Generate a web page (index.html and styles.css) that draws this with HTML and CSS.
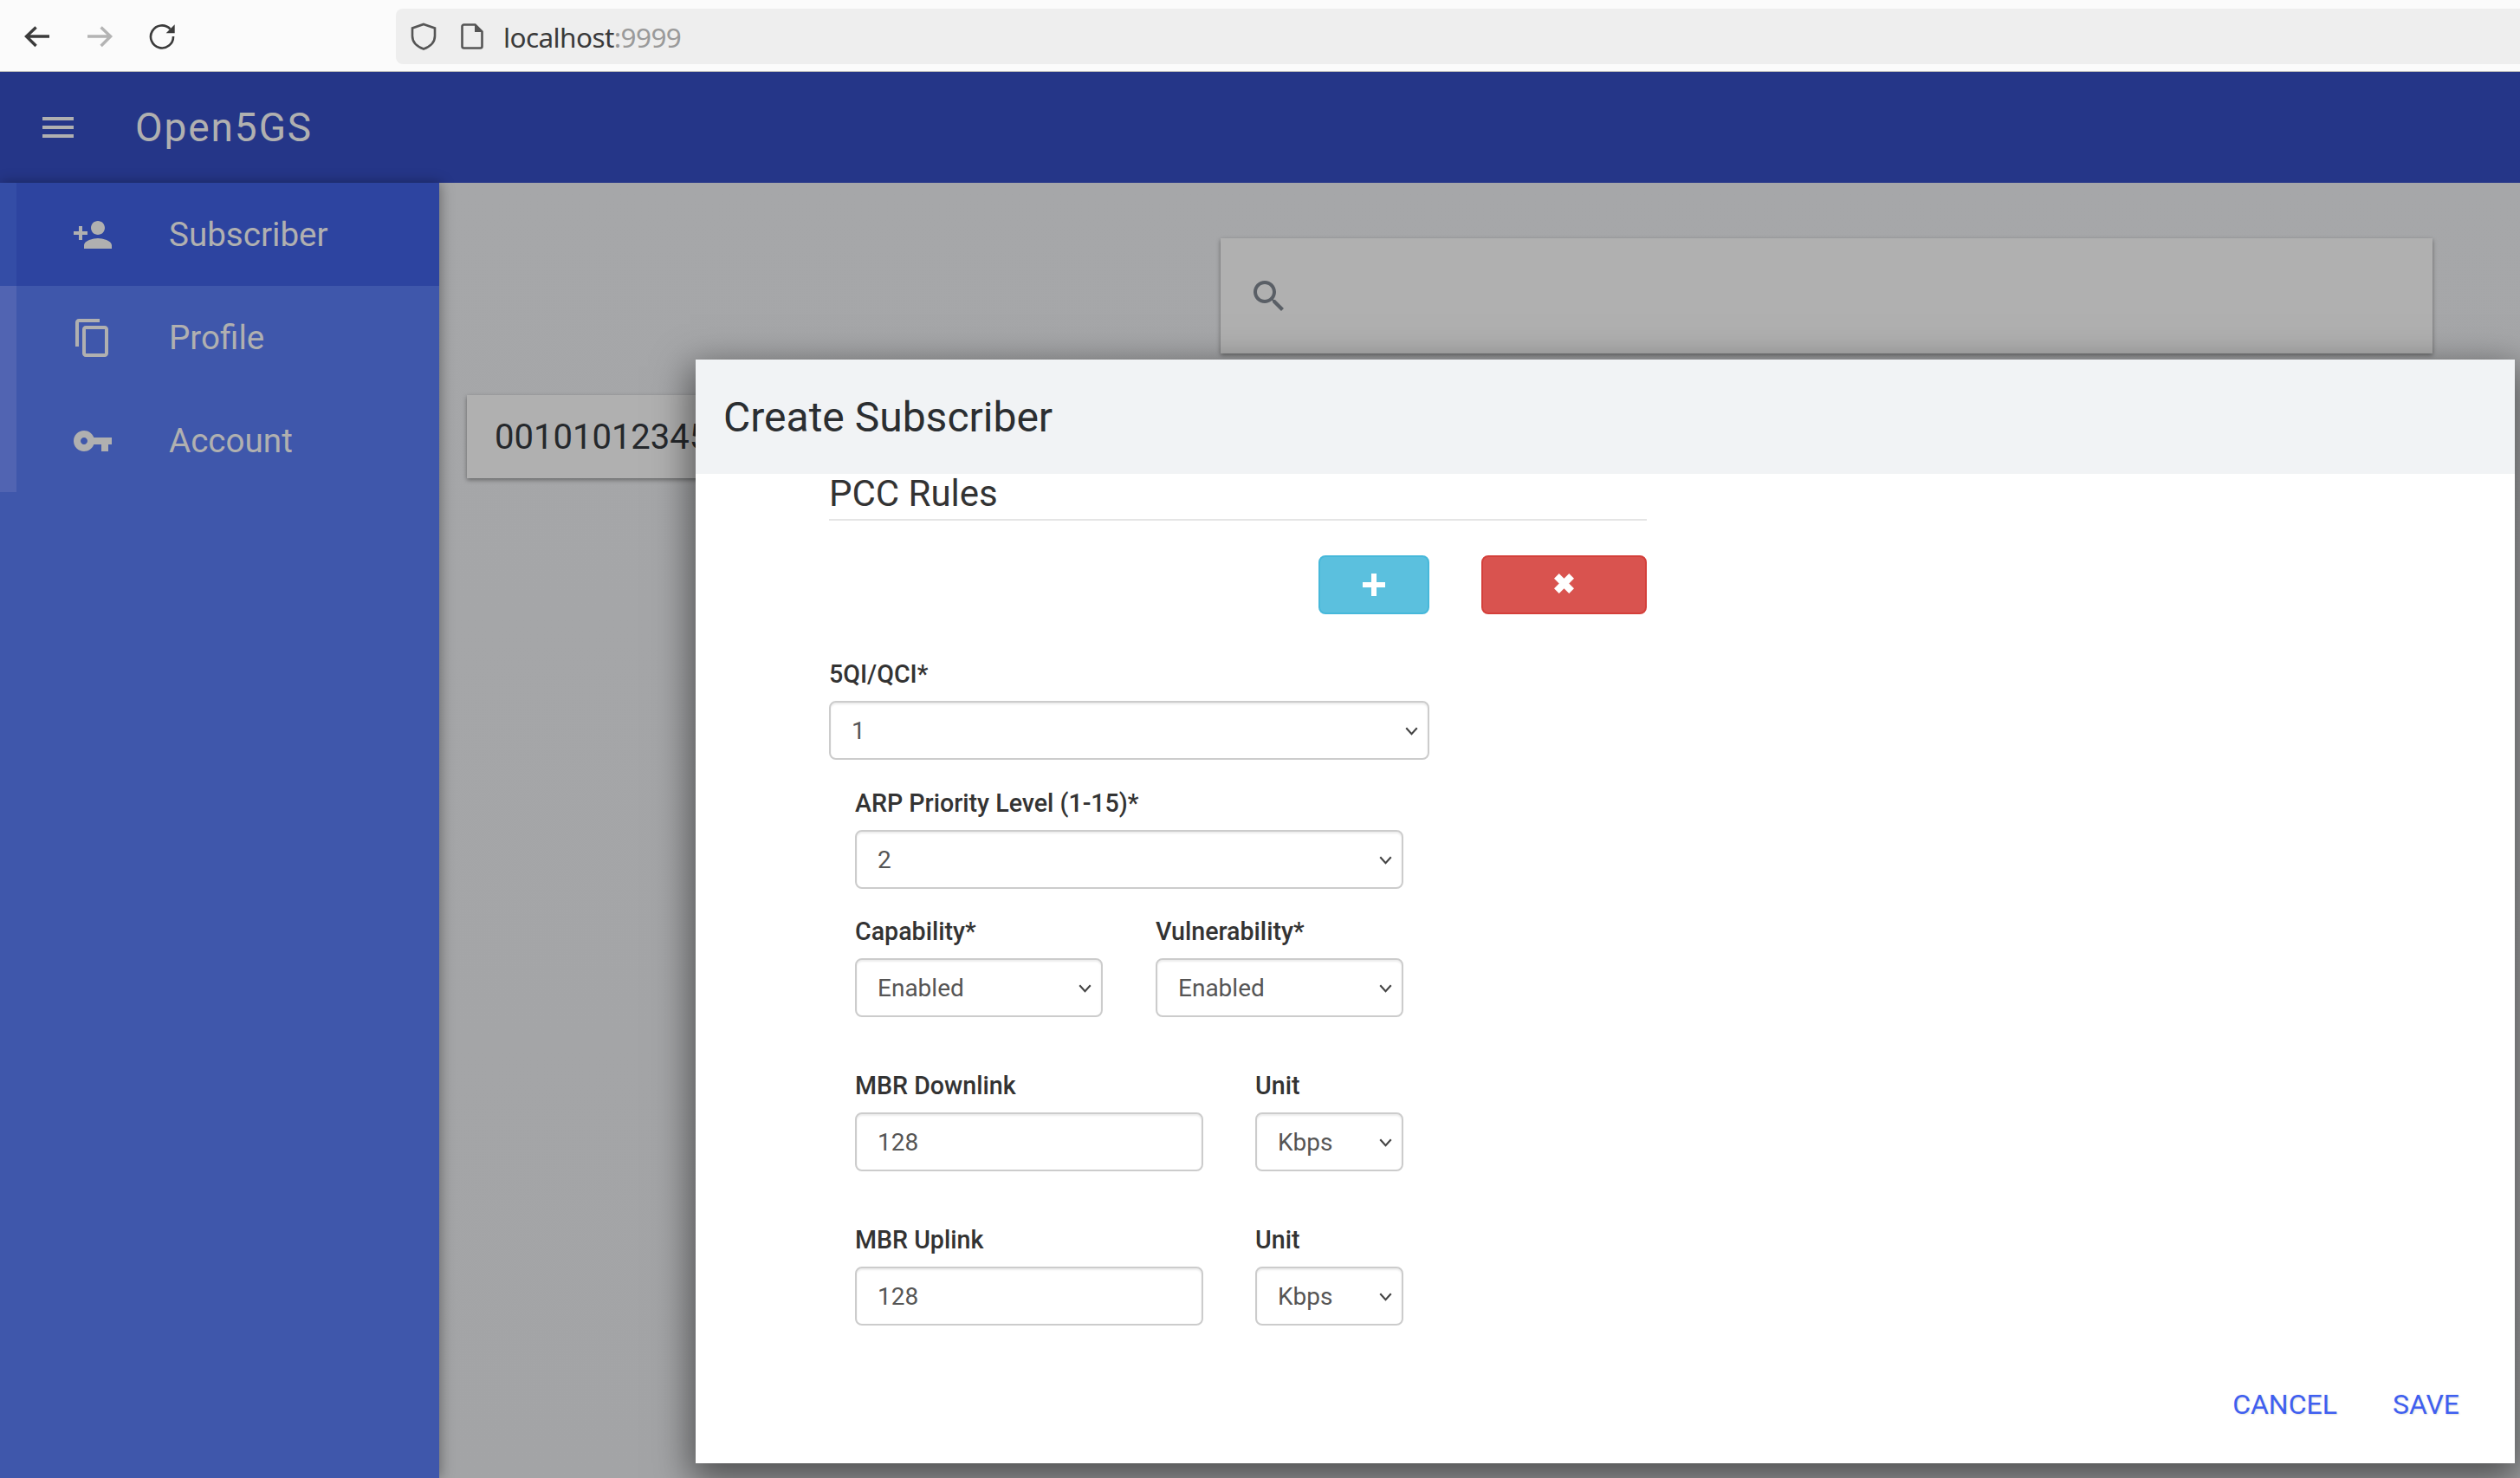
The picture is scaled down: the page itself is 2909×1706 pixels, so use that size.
FILE: index.html
```html
<!DOCTYPE html>
<html lang="en">
<head>
<meta charset="utf-8">
<title>Open5GS</title>
<link rel="stylesheet" href="styles.css">
</head>
<body>
<div class="page">
  <div class="toolbar">
    <svg class="tb-icon" viewBox="0 0 32 32"><path class="stroke dark" d="M30 16H4M14.600 5.600L3.500 16l11.100 11"/></svg>
    <svg class="tb-icon" viewBox="0 0 32 32"><path class="stroke faint" d="M2 16h26M17.600 5.600L28.600 16l-11 11"/></svg>
    <svg class="tb-icon" viewBox="0 0 32 32"><path class="stroke dark thin" d="M25.500 7.500A13 13 0 1 0 29 16"/><path class="fill-dark" d="M30.700 2.300v10h-10z"/></svg>
    <div class="urlbar">
      <svg class="shield" viewBox="0 0 30 32"><path class="stroke mid thin" d="M15 2l13 4.500v9C28 23 22 28 15 30.500 8 28 2 23 2 15.500v-9z"/></svg>
      <svg class="file" viewBox="0 0 26 30"><path class="stroke mid thin" d="M3.500 1.500h13l8 8v17a2 2 0 0 1-2 2h-19a2 2 0 0 1-2-2v-23a2 2 0 0 1 2-2z"/><path class="fill-mid" d="M16 1.500l8.500 8.500H16z"/></svg>
      <span class="url">localhost<span class="port">:9999</span></span>
    </div>
  </div>
  <header class="appbar">
    <svg class="mi menu-icon" viewBox="0 0 24 24"><path d="M3 18h18v-2H3v2zm0-5h18v-2H3v2zm0-7v2h18V6H3z"/></svg>
    <span class="brand">Open5GS</span>
  </header>
  <div class="main">
    <nav class="sidebar">
      <a class="nav-item active">
        <svg class="mi" viewBox="0 0 24 24"><path d="M15 12c2.210 0 4-1.790 4-4s-1.790-4-4-4-4 1.790-4 4 1.790 4 4 4zm-9-2V7H4v3H1v2h3v3h2v-3h3v-2H6zm9 4c-2.670 0-8 1.340-8 4v2h16v-2c0-2.660-5.330-4-8-4z"/></svg>
        <span>Subscriber</span>
      </a>
      <a class="nav-item">
        <svg class="mi" viewBox="0 0 24 24"><path d="M16 1H4c-1.100 0-2 .9-2 2v14h2V3h12V1zm3 4H8c-1.100 0-2 .9-2 2v14c0 1.100.9 2 2 2h11c1.100 0 2-.9 2-2V7c0-1.100-.9-2-2-2zm0 16H8V7h11v14z"/></svg>
        <span>Profile</span>
      </a>
      <a class="nav-item">
        <svg class="mi" viewBox="0 0 24 24"><path d="M12.650 10C11.830 7.670 9.610 6 7 6c-3.310 0-6 2.690-6 6s2.690 6 6 6c2.610 0 4.830-1.670 5.650-4H17v4h4v-4h2v-4H12.650zM7 14c-1.100 0-2-.9-2-2s.9-2 2-2 2 .9 2 2-.9 2-2 2z"/></svg>
        <span>Account</span>
      </a>
    </nav>
    <main class="content">
      <div class="search-card">
        <svg class="mi search-icon" viewBox="0 0 24 24"><path d="M15.500 14h-.79l-.28-.27C15.410 12.590 16 11.110 16 9.500 16 5.910 13.090 3 9.500 3S3 5.910 3 9.500 5.910 16 9.500 16c1.610 0 3.090-.59 4.230-1.570l.27.28v.79l5 4.990L20.490 19l-4.990-5zm-6 0C7.010 14 5 11.990 5 9.500S7.010 5 9.500 5 14 7.010 14 9.500 11.990 14 9.500 14z"/></svg>
      </div>
      <div class="sub-card">001010123456789</div>
    </main>
  </div>

  <section class="dialog">
    <h2 class="dialog-title">Create Subscriber</h2>
    <div class="dialog-body">
      <form class="form">
        <h3 class="legend">PCC Rules</h3>
        <div class="actions">
          <button type="button" class="btn btn-add"><svg class="glyph" viewBox="0 0 26 26"><path d="M10 0h6v10h10v6H16v10h-6V16H0v-6h10z"/></svg></button>
          <button type="button" class="btn btn-del"><svg class="glyph glyph-x" viewBox="0 0 24 24"><path d="M6 0l6 6 6-6 6 6-6 6 6 6-6 6-6-6-6 6-6-6 6-6-6-6z"/></svg></button>
        </div>
        <div class="field qci">
          <label class="label">5QI/QCI*</label>
          <div class="select-wrap"><select class="control"><option>1</option></select><svg class="chev" viewBox="0 0 12 8"><path d="M1 1l5 5.500L11 1"/></svg></div>
        </div>
        <div class="nested">
          <div class="field">
            <label class="label">ARP Priority Level (1-15)*</label>
            <div class="select-wrap"><select class="control"><option>2</option></select><svg class="chev" viewBox="0 0 12 8"><path d="M1 1l5 5.500L11 1"/></svg></div>
          </div>
          <div class="row-half">
            <div class="field">
              <label class="label">Capability*</label>
              <div class="select-wrap"><select class="control"><option>Enabled</option></select><svg class="chev" viewBox="0 0 12 8"><path d="M1 1l5 5.500L11 1"/></svg></div>
            </div>
            <div class="field">
              <label class="label">Vulnerability*</label>
              <div class="select-wrap"><select class="control"><option>Enabled</option></select><svg class="chev" viewBox="0 0 12 8"><path d="M1 1l5 5.500L11 1"/></svg></div>
            </div>
          </div>
          <div class="row-unit">
            <div class="field">
              <label class="label">MBR Downlink</label>
              <input class="control" type="text" value="128">
            </div>
            <div class="field">
              <label class="label">Unit</label>
              <div class="select-wrap"><select class="control"><option>Kbps</option></select><svg class="chev" viewBox="0 0 12 8"><path d="M1 1l5 5.500L11 1"/></svg></div>
            </div>
          </div>
          <div class="row-unit">
            <div class="field">
              <label class="label">MBR Uplink</label>
              <input class="control" type="text" value="128">
            </div>
            <div class="field">
              <label class="label">Unit</label>
              <div class="select-wrap"><select class="control"><option>Kbps</option></select><svg class="chev" viewBox="0 0 12 8"><path d="M1 1l5 5.500L11 1"/></svg></div>
            </div>
          </div>
        </div>
      </form>
    </div>
    <div class="dialog-footer">
      <button type="button" class="link-btn">CANCEL</button>
      <button type="button" class="link-btn">SAVE</button>
    </div>
  </section>
</div>
</body>
</html>
```
FILE: styles.css
```css
* { box-sizing: border-box; }
html, body { margin: 0; padding: 0; }
body { font-family: Roboto, "Liberation Sans", sans-serif; background: #a5a6a8; }
.page { position: relative; width: 2909px; height: 1706px; overflow: hidden; display: flex; flex-direction: column; }

/* browser toolbar */
.toolbar { height: 83px; flex: none; display: flex; align-items: center; gap: 40px; padding-left: 27px; background: #fbfbfb; border-bottom: 1px solid #bdbdbd; }
.tb-icon { width: 32px; height: 32px; flex: none; position: relative; top: 1px; }
.stroke { fill: none; stroke-width: 3.4; }
.stroke.thin { stroke-width: 2.6; }
.stroke.dark { stroke: #3b3b3b; }
.stroke.faint { stroke: #b4b4b4; }
.stroke.mid { stroke: #555; }
.fill-dark { fill: #3b3b3b; }
.fill-mid { fill: #555; }
.urlbar { margin-left: 214px; flex: 1; height: 64px; margin-top: 2px; display: flex; align-items: center; padding-left: 17px; background: #eeeeee; border-radius: 8px 0 0 8px; }
.shield { width: 30px; height: 32px; flex: none; }
.file { width: 26px; height: 30px; flex: none; margin-left: 28px; }
.url { margin-left: 23px; font-family: "Noto Sans", sans-serif; font-size: 31.5px; letter-spacing: -0.6px; color: #3a3a3a; }
.port { color: #9a9a9a; }

/* app bar */
.appbar { height: 128px; flex: none; display: flex; align-items: center; padding-left: 43px; background: #253688; }
.mi { width: 48px; height: 48px; flex: none; fill: #b0b0b0; }
.brand { margin-left: 65px; font-size: 46px; letter-spacing: 1.9px; color: #b0b0b0; }

/* layout */
.main { flex: 1; display: flex; min-height: 0; }
.sidebar { width: 507px; flex: none; background: #3f57ab; box-shadow: 2px 0 14px rgba(0,0,0,.35); position: relative; }
.nav-item { height: 119px; display: flex; align-items: center; gap: 64px; padding-left: 64px; border-left: 19px solid #5164b2; font-size: 38.6px; color: #b0b0b0; }
.nav-item.active { background: #2d44a0; border-left-color: #344da6; }
.content { flex: 1; padding: 64px 0 0 32px; min-width: 0; background: linear-gradient(#a6a7a9, #a3a4a6); }
.search-card { height: 133px; margin-left: 870px; width: 1399px; display: flex; align-items: center; padding-left: 32px; background: #b0b0b0; box-shadow: 0 2px 5px rgba(0,0,0,.4); }
.search-icon { fill: #5a5f66; }
.sub-card { margin-top: 48px; width: 1200px; height: 96px; display: flex; align-items: center; padding-left: 32px; background: #b0b0b0; box-shadow: 0 2px 5px rgba(0,0,0,.4); font-size: 40px; color: #25282c; }

/* dialog */
.dialog { position: absolute; left: 803px; top: 415px; width: 2100px; height: 1274px; display: flex; flex-direction: column; background: #fff; box-shadow: 0 14px 40px 6px rgba(0,0,0,.5); }
.dialog-title { margin: 0; height: 132px; flex: none; display: flex; align-items: center; padding-left: 32px; background: #f1f3f5; font-size: 48px; font-weight: 400; color: #2b2e31; }
.dialog-body { flex: 1; padding-left: 154px; min-height: 0; }
.form { width: 944px; }
.legend { margin: 0; height: 54px; padding-bottom: 7px; display: flex; align-items: center; border-bottom: 2px solid #e5e5e5; font-size: 42px; font-weight: 400; color: #333; }
.actions { display: flex; justify-content: flex-end; gap: 60px; margin-top: 40px; }
.btn { height: 68px; padding: 0; display: flex; align-items: center; justify-content: center; border-radius: 8px; border: 2px solid; }
.btn-add { width: 128px; background: #5bc0de; border-color: #46b8da; }
.btn-del { width: 191px; background: #d9534f; border-color: #d43f3a; }
.glyph { width: 26px; height: 26px; fill: #fff; }
.glyph-x { width: 23px; height: 23px; margin-top: -3px; }

.field { display: flex; flex-direction: column; min-width: 0; }
.label { height: 46px; flex: none; font-size: 28.6px; line-height: 31px; font-weight: 500; color: #333; }
.qci { margin-top: 54px; width: 693px; }
.nested { width: 633px; margin: 35px 0 0 30px; display: flex; flex-direction: column; }
.row-half { display: grid; grid-template-columns: 286px 286px; column-gap: 61px; margin-top: 34px; }
.row-unit { display: grid; grid-template-columns: 402px 171px; column-gap: 60px; margin-top: 64px; }
.select-wrap { position: relative; }
.control { display: block; width: 100%; height: 68px; padding: 0 24px; border: 2px solid #ccc; border-radius: 8px; background: #fff; box-shadow: inset 0 2px 2px rgba(0,0,0,.075); font-family: Roboto, "Liberation Sans", sans-serif; font-size: 28px; color: #555; appearance: none; outline: none; }
.chev { position: absolute; right: 13px; top: 30px; width: 15px; height: 10px; pointer-events: none; fill: none; stroke: #444; stroke-width: 1.7; }

/* footer */
.dialog-footer { flex: none; height: 142px; display: flex; justify-content: flex-end; align-items: flex-end; gap: 64px; padding: 0 64px 49px 0; }
.link-btn { padding: 0; border: 0; background: none; font-family: Roboto, "Liberation Sans", sans-serif; font-size: 32px; line-height: 38px; color: #3f5ff0; text-shadow: 1px 1px 2px rgba(0,0,0,.12); }
```
